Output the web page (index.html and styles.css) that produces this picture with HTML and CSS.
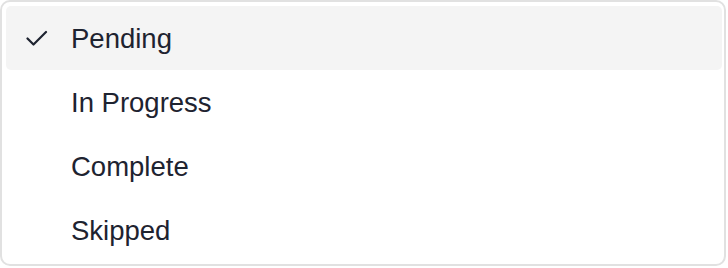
FILE: index.html
```html
<!DOCTYPE html>
<html lang="en">
<head>
<meta charset="UTF-8">
<meta name="viewport" content="width=device-width, initial-scale=1.0">
<title>Status Select</title>
<link rel="stylesheet" href="styles.css">
</head>
<body>

<ul class="menu" role="listbox">
  <li class="option selected" role="option" aria-selected="true">
    <span class="check">
      <svg width="22" height="16" viewBox="0 0 22 16"><path d="M1.5 8.5 L7.5 14.5 L20 2" fill="none" stroke="#1e2330" stroke-width="2.2" stroke-linecap="round" stroke-linejoin="round"/></svg>
    </span>
    Pending
  </li>
  <li class="option" role="option"><span class="check"></span>In Progress</li>
  <li class="option" role="option"><span class="check"></span>Complete</li>
  <li class="option" role="option"><span class="check"></span>Skipped</li>
</ul>

</body>
</html>
```

FILE: styles.css
```css
body {
  margin: 0;
  padding: 0;
  background-color: #fff;
  font-family: "Liberation Sans", Arial, sans-serif;
}

.menu {
  list-style: none;
  margin: 0;
  width: 726px;
  height: 266px;
  box-sizing: border-box;
  padding: 4px 2px 4px 4px;
  border: 2px solid #e1e1e1;
  border-radius: 10px;
  background-color: #fff;
}

.option {
  display: flex;
  align-items: center;
  box-sizing: border-box;
  height: 64px;
  padding: 2px 0 0 20px;
  border-radius: 5px;
  font-size: 27.5px;
  color: #1e2330;
  cursor: pointer;
}

.option.selected {
  background-color: #f4f4f4;
}

.check {
  display: flex;
  align-items: center;
  width: 45px;
  margin-top: -2px;
  flex-shrink: 0;
}
```
